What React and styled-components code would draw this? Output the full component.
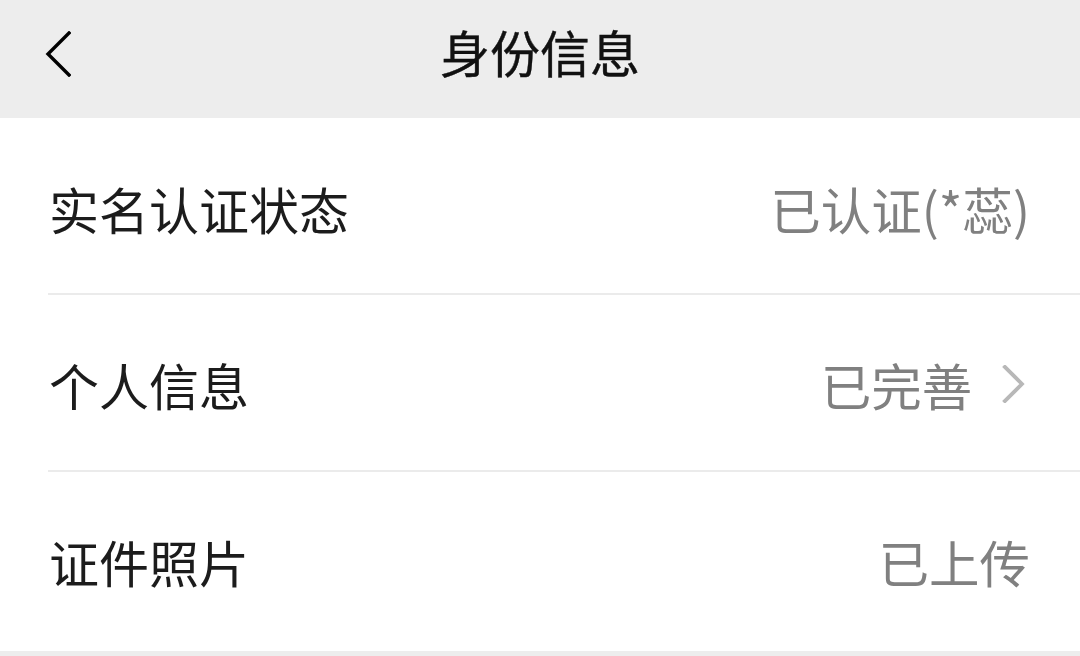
import React from 'react';
import styled, {createGlobalStyle} from 'styled-components';

const GlobalStyle = createGlobalStyle`
  html, body {
    margin: 0;
    padding: 0;
    background: #ededed;
    font-family: "Noto Sans CJK SC", "Noto Sans", sans-serif;
  }
`;

const Page = styled.div`
  width: 1080px;
  height: 656px;
  overflow: hidden;
  background: #ededed;
`;

const Header = styled.header`
  position: relative;
  height: 118px;
  display: flex;
  align-items: center;
  justify-content: center;
  background: #ededed;
`;

const BackButton = styled.button`
  position: absolute;
  left: 40px;
  top: 28px;
  width: 36px;
  height: 52px;
  padding: 0;
  border: none;
  background: none;
  display: flex;
  align-items: center;
  justify-content: center;
`;

const Title = styled.h1`
  margin: 0;
  margin-top: -16px;
  font-size: 50px;
  font-weight: 400;
  -webkit-text-stroke: 0.4px #111;
  color: #111;
`;

const List = styled.div`
  background: #fff;
  padding-bottom: 2px;
`;

const Row = styled.div`
  position: relative;
  height: 177px;
  display: flex;
  align-items: center;
  justify-content: space-between;
  padding: 0 50px 0 49px;
  box-sizing: border-box;

  &::after {
    content: '';
    display: ${({last}) => (last ? 'none' : 'block')};
    position: absolute;
    left: 48px;
    right: 0;
    bottom: 0;
    height: 2px;
    background: #ebebeb;
  }
`;

const Label = styled.span`
  font-size: 50px;
  color: #1c1c1c;
  margin-top: ${({offset}) => offset || 0}px;
`;

const Value = styled.span`
  display: flex;
  align-items: center;
  gap: 30px;
  font-size: 50.5px;
  color: #808080;
  margin-top: ${({offset}) => offset || 0}px;
`;

const ArrowBox = styled.span`
  display: flex;
  margin-right: 5px;
`;

const Chevron = ({color = '#b8b8b8', size = 40, stroke = 4, dir = 'right'}) => (
  <svg width={size * 0.6} height={size} viewBox="0 0 24 40" fill="none">
    <path
      d={dir === 'right' ? 'M3 2 L21 20 L3 38' : 'M21 2 L3 20 L21 38'}
      stroke={color}
      strokeWidth={stroke}
      strokeLinecap="square"
      strokeLinejoin="miter"
    />
  </svg>
);

const rows = [
  {label: '实名认证状态', value: '已认证(*蕊)'},
  {label: '个人信息', value: '已完善', arrow: true},
  {label: '证件照片', value: '已上传'},
];

function App() {
  return (
    <Page>
      <GlobalStyle />
      <Header>
        <BackButton>
          <svg width="26" height="46" viewBox="0 0 26 46" fill="none">
            <path
              d="M24 2 L3 23 L24 44"
              stroke="#000"
              strokeWidth="3.4"
              strokeLinecap="square"
            />
          </svg>
        </BackButton>
        <Title>身份信息</Title>
      </Header>
      <List>
        {rows.map((r, i) => (
          <Row key={r.label} last={i === rows.length - 1}>
            <Label offset={i === 0 ? 2 : 0}>{r.label}</Label>
            <Value offset={i === 0 ? 2 : 0}>
              {r.value}
              {r.arrow && (
                <ArrowBox>
                  <Chevron size={38} />
                </ArrowBox>
              )}
            </Value>
          </Row>
        ))}
      </List>
    </Page>
  );
}

export default App;
